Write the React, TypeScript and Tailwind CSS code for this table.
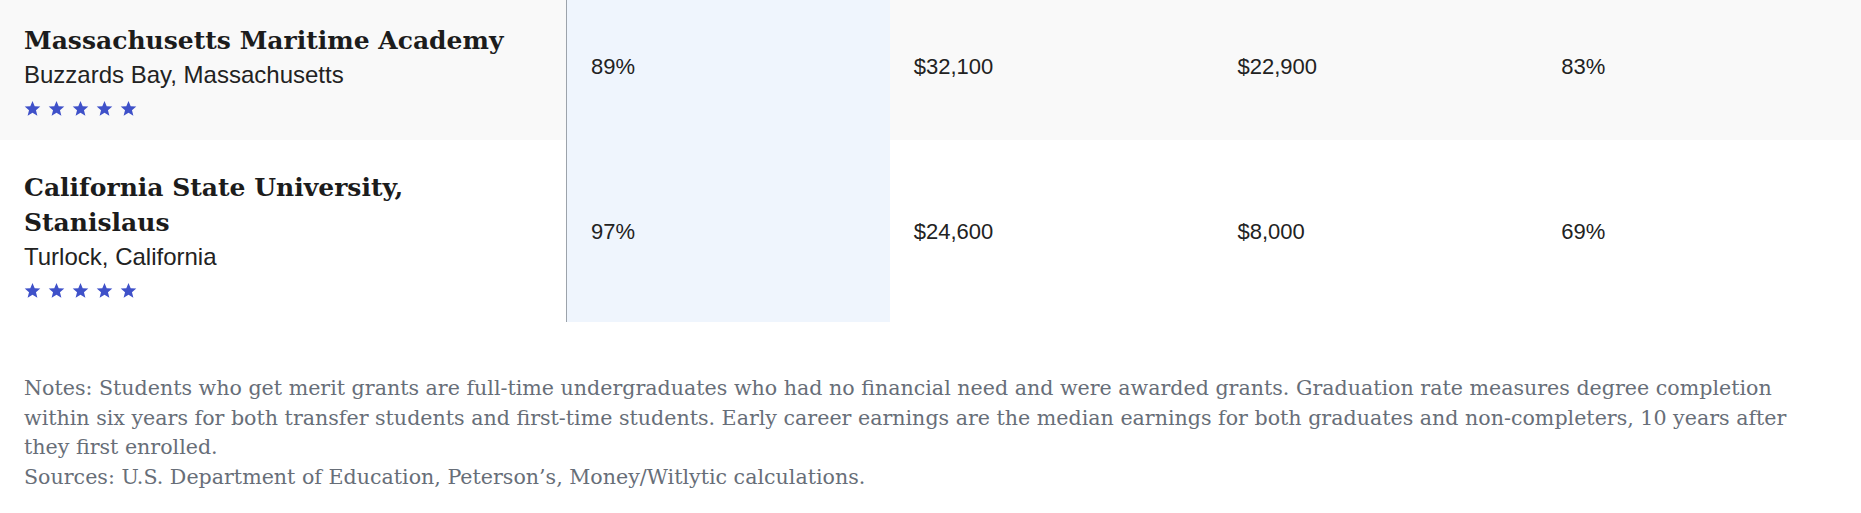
interface School {
  name: string;
  location: string;
  gradRate: string;
  price: string;
  earnings: string;
  merit: string;
}

const schools: School[] = [
  {
    name: 'Massachusetts Maritime Academy',
    location: 'Buzzards Bay, Massachusetts',
    gradRate: '89%',
    price: '$32,100',
    earnings: '$22,900',
    merit: '83%',
  },
  {
    name: 'California State University, Stanislaus',
    location: 'Turlock, California',
    gradRate: '97%',
    price: '$24,600',
    earnings: '$8,000',
    merit: '69%',
  },
];

function Stars() {
  return (
    <div className="flex items-center gap-[7px] mt-[11px] h-4">
      {[0, 1, 2, 3, 4].map(i => (
        <svg key={i} viewBox="0 0 24 24" className="w-[17px] h-[17px] text-[#3f51c9]" fill="currentColor">
          <polygon points="12,1.5 15.1,8.9 23,9.3 16.9,14.4 18.9,22.2 12,17.9 5.1,22.2 7.1,14.4 1,9.3 8.9,8.9" />
        </svg>
      ))}
    </div>
  );
}

const cell = "flex items-center pl-6 font-['Liberation_Sans',Arial,sans-serif] text-[22px]";

export default function App() {
  return (
    <div className="w-[1861px] bg-white text-[#222] overflow-hidden">
      <div className="-mt-[7px]">
        {schools.map((s, idx) => (
          <div
            key={s.name}
            className={`grid grid-cols-[566px_1fr_1fr_1fr_1fr] ${idx === 0 ? 'bg-[#f9f9f9]' : 'bg-white'}`}
          >
            <div className="pl-6 pr-6 pt-[30px] pb-[24px]">
              <div className="font-['DejaVu_Serif',serif] font-bold text-[25px] leading-[35px] text-[#1c1c1c] max-w-[480px]">
                {s.name}
              </div>
              <div className="font-['Liberation_Sans',Arial,sans-serif] text-[24px] leading-[28px] mt-[3px]">
                {s.location}
              </div>
              <Stars />
            </div>
            <div className={`${cell} border-l border-[#9ca3ab] bg-[#eff5fd]`}>{s.gradRate}</div>
            <div className={cell}>{s.price}</div>
            <div className={cell}>{s.earnings}</div>
            <div className={`${cell} mr-[3px]`}>{s.merit}</div>
          </div>
        ))}
      </div>

      <div className="px-6 pt-[52px] pb-6 font-['DejaVu_Serif',serif] text-[20.6px] leading-[29.5px] text-[#676e78]">
        <div className="max-w-[1776px]">
          <p>
            Notes: Students who get merit grants are full-time undergraduates who had no financial need and were
            awarded grants. Graduation rate measures degree completion within six years for both transfer students and
            first-time students. Early career earnings are the median earnings for both graduates and non-completers,
            10 years after they first enrolled.
          </p>
          <p>Sources: U.S. Department of Education, Peterson’s, Money/Witlytic calculations.</p>
        </div>
      </div>
    </div>
  );
}
